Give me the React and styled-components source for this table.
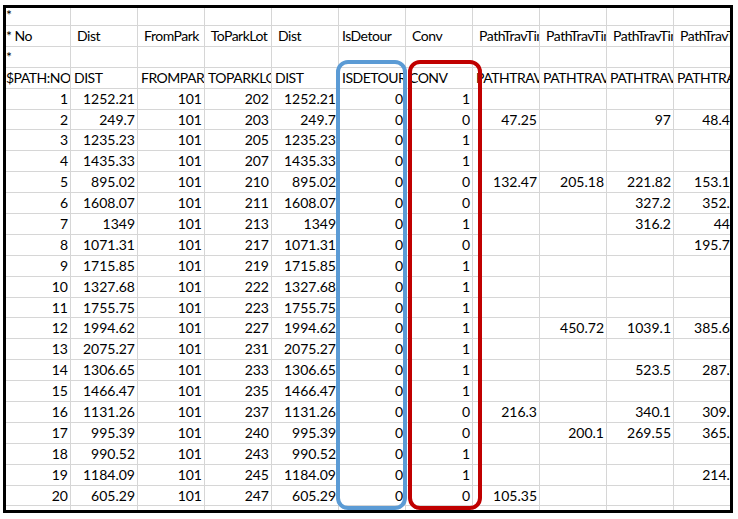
import React from "react";
import styled, { createGlobalStyle } from "styled-components";

const Global = createGlobalStyle`
  html, body { margin: 0; padding: 0; background: #ffffff; }
  body { font-family: Lato, "Liberation Sans", sans-serif; }
`;

const Page = styled.div`
  position: relative;
  width: 738px;
  height: 519px;
  background: #ffffff;
  padding: 5px 0 0 3px;
  box-sizing: border-box;
`;

const Frame = styled.div`
  width: 730px;
  height: 508px;
  box-sizing: border-box;
  border: 3px solid #000000;
  overflow: hidden;
  background: #ffffff;
`;

const Grid = styled.div`
  margin: -2.9px 0 0 -3px;
  display: flex;
  flex-direction: column;
`;

const Row = styled.div`
  display: flex;
  flex: none;
  height: 20.9px;
`;

const Cell = styled.div`
  flex: none;
  width: ${(p) => (p.$first ? 68 : 67)}px;
  height: 20.9px;
  box-sizing: border-box;
  border-right: 1px solid #d6d6d6;
  border-bottom: 1px solid #d6d6d6;
  overflow: hidden;
  white-space: pre;
  padding: 0 2px 0 3px;
  font-family: Lato, "Liberation Sans", sans-serif;
  font-size: 14px;
  line-height: 20px;
  color: #000000;
  text-align: ${(p) => (p.$num ? "right" : "left")};
  letter-spacing: ${(p) => (p.$num ? "0" : "-0.5px")};
`;

const Outline = styled.div`
  position: absolute;
  top: 60px;
  left: ${(p) => p.$left}px;
  width: ${(p) => p.$width}px;
  height: 450px;
  box-sizing: border-box;
  border: 4px solid ${(p) => p.$color};
  border-radius: 12px;
  pointer-events: none;
`;

const headers = [
  ["*", "", "", "", "", "", "", "", "", "", ""],
  ["* No", " Dist", " FromPark", " ToParkLot", " Dist", "IsDetour", " Conv", " PathTravTime", " PathTravTime", " PathTravTime", " PathTravTime"],
  ["*", "", "", "", "", "", "", "", "", "", ""],
  ["$PATH:NO", "DIST", "FROMPARKLOT", "TOPARKLOT", "DIST", "ISDETOUR", "CONV", "PATHTRAVTIME", "PATHTRAVTIME", "PATHTRAVTIME", "PATHTRAVTIME"],
];

const data = [
  [1, "1252.21", 101, 202, "1252.21", 0, 1, "", "", "", ""],
  [2, "249.7", 101, 203, "249.7", 0, 0, "47.25", "", "97", "48.45"],
  [3, "1235.23", 101, 205, "1235.23", 0, 1, "", "", "", ""],
  [4, "1435.33", 101, 207, "1435.33", 0, 1, "", "", "", ""],
  [5, "895.02", 101, 210, "895.02", 0, 0, "132.47", "205.18", "221.82", "153.16"],
  [6, "1608.07", 101, 211, "1608.07", 0, 0, "", "", "327.2", "352.5"],
  [7, "1349", 101, 213, "1349", 0, 1, "", "", "316.2", "445"],
  [8, "1071.31", 101, 217, "1071.31", 0, 0, "", "", "", "195.72"],
  [9, "1715.85", 101, 219, "1715.85", 0, 1, "", "", "", ""],
  [10, "1327.68", 101, 222, "1327.68", 0, 1, "", "", "", ""],
  [11, "1755.75", 101, 223, "1755.75", 0, 1, "", "", "", ""],
  [12, "1994.62", 101, 227, "1994.62", 0, 1, "", "450.72", "1039.1", "385.61"],
  [13, "2075.27", 101, 231, "2075.27", 0, 1, "", "", "", ""],
  [14, "1306.65", 101, 233, "1306.65", 0, 1, "", "", "523.5", "287.4"],
  [15, "1466.47", 101, 235, "1466.47", 0, 1, "", "", "", ""],
  [16, "1131.26", 101, 237, "1131.26", 0, 0, "216.3", "", "340.1", "309.2"],
  [17, "995.39", 101, 240, "995.39", 0, 0, "", "200.1", "269.55", "365.1"],
  [18, "990.52", 101, 243, "990.52", 0, 1, "", "", "", ""],
  [19, "1184.09", 101, 245, "1184.09", 0, 1, "", "", "", "214.3"],
  [20, "605.29", 101, 247, "605.29", 0, 0, "105.35", "", "", ""],
  ["", "", "", "", "", "", "", "", "", "", ""],
];

export default function App() {
  return (
    <>
      <Global />
      <Page>
        <Frame>
          <Grid>
            {headers.map((r, i) => (
              <Row key={"h" + i}>
                {r.map((c, j) => (
                  <Cell key={j} $first={j === 0}>
                    {c}
                  </Cell>
                ))}
              </Row>
            ))}
            {data.map((r, i) => (
              <Row key={"d" + i}>
                {r.map((c, j) => (
                  <Cell key={j} $first={j === 0} $num>
                    {c}
                  </Cell>
                ))}
              </Row>
            ))}
          </Grid>
        </Frame>
        <Outline $left={336} $width={71} $color="#5b9bd5" />
        <Outline $left={408} $width={74} $color="#c00000" />
      </Page>
    </>
  );
}
